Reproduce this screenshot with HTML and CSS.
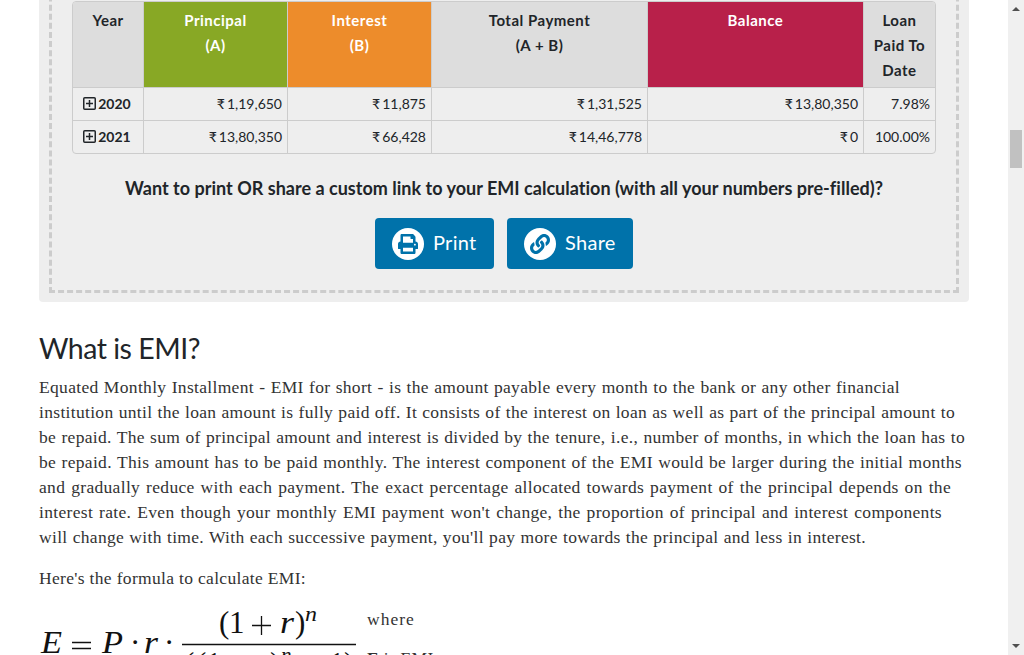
FILE: index.html
```html
<!DOCTYPE html>
<html lang="en">
<head>
<meta charset="utf-8">
<title>EMI Calculator</title>
<link rel="stylesheet" href="styles.css">
</head>
<body>
<div class="page">
<main class="content">
  <section class="panel">
    <div class="panel-inner">
      <table class="schedule">
        <colgroup><col class="c-year"><col class="c-mid"><col class="c-mid"><col class="c-wide"><col class="c-wide"><col class="c-paid"></colgroup>
        <thead>
          <tr><th>Year</th><th class="green">Principal<br>(A)</th><th class="orange">Interest<br>(B)</th><th>Total Payment<br>(A + B)</th><th class="red">Balance</th><th>Loan<br>Paid To<br>Date</th></tr>
        </thead>
        <tbody>
          <tr><td class="year"><svg class="plus" viewBox="0 0 13 13"><rect x=".75" y=".75" width="11.5" height="11.5" rx="1"/><path d="M6.5 3v7M3 6.5h7"/></svg>2020</td><td>₹ 1,19,650</td><td>₹ 11,875</td><td>₹ 1,31,525</td><td>₹ 13,80,350</td><td>7.98%</td></tr>
          <tr><td class="year"><svg class="plus" viewBox="0 0 13 13"><rect x=".75" y=".75" width="11.5" height="11.5" rx="1"/><path d="M6.5 3v7M3 6.5h7"/></svg>2021</td><td>₹ 13,80,350</td><td>₹ 66,428</td><td>₹ 14,46,778</td><td>₹ 0</td><td>100.00%</td></tr>
        </tbody>
      </table>
      <p class="prompt">Want to print OR share a custom link to your EMI calculation (with all your numbers pre-filled)?</p>
      <div class="buttons">
        <a class="btn btn-print"><span class="disc"><svg width="20" height="20" viewBox="0 0 512 512"><path d="M448 192V77.25c0-8.49-3.37-16.62-9.37-22.63L393.37 9.37c-6-6-14.14-9.37-22.63-9.37H96C78.33 0 64 14.33 64 32v160c-35.35 0-64 28.65-64 64v112c0 8.84 7.16 16 16 16h48v96c0 17.67 14.33 32 32 32h320c17.67 0 32-14.33 32-32v-96h48c8.84 0 16-7.16 16-16V256c0-35.35-28.65-64-64-64zm-64 256H128v-96h256v96zm0-224H128V64h192v48c0 8.84 7.16 16 16 16h48v96zm48 72c-13.25 0-24-10.75-24-24 0-13.26 10.75-24 24-24s24 10.74 24 24c0 13.25-10.75 24-24 24z"/></svg></span><span class="label">Print</span></a>
        <a class="btn btn-share"><span class="disc"><svg width="20" height="20" viewBox="0 0 512 512"><path d="M326.612 185.391c59.747 59.809 58.927 155.698.36 214.59-.11.12-.24.25-.36.37l-67.2 67.2c-59.27 59.27-155.699 59.262-214.96 0-59.27-59.26-59.27-155.7 0-214.96l37.106-37.106c9.84-9.84 26.786-3.3 27.294 10.606.648 17.722 3.826 35.527 9.69 52.721 1.986 5.822.567 12.262-3.783 16.612l-13.087 13.087c-28.026 28.026-28.905 73.66-1.155 101.96 28.024 28.579 74.086 28.749 102.325.51l67.2-67.19c28.191-28.191 28.073-73.757 0-101.83-3.701-3.694-7.429-6.564-10.341-8.569a16.037 16.037 0 0 1-6.947-12.606c-.396-10.567 3.348-21.456 11.698-29.806l21.054-21.055c5.521-5.521 14.182-6.199 20.584-1.731a152.482 152.482 0 0 1 20.522 17.197zM467.547 44.449c-59.261-59.262-155.69-59.27-214.96 0l-67.2 67.2c-.12.12-.25.25-.36.37-58.566 58.892-59.387 154.781.36 214.59a152.454 152.454 0 0 0 20.521 17.196c6.402 4.468 15.064 3.789 20.584-1.731l21.054-21.055c8.35-8.35 12.094-19.239 11.698-29.806a16.037 16.037 0 0 0-6.947-12.606c-2.912-2.005-6.64-4.875-10.341-8.569-28.073-28.073-28.191-73.639 0-101.83l67.2-67.19c28.239-28.239 74.3-28.069 102.325.51 27.75 28.3 26.872 73.934-1.155 101.96l-13.087 13.087c-4.35 4.35-5.769 10.79-3.783 16.612 5.864 17.194 9.042 34.999 9.69 52.721.509 13.906 17.454 20.446 27.294 10.606l37.106-37.106c59.271-59.259 59.271-155.699.001-214.959z"/></svg></span><span class="label">Share</span></a>
      </div>
    </div>
  </section>
  <h2>What is EMI?</h2>
  <p class="prose">
    <span class="line l1">Equated Monthly Installment - EMI for short - is the amount payable every month to the bank or any other financial</span>
    <span class="line l2">institution until the loan amount is fully paid off. It consists of the interest on loan as well as part of the principal amount to</span>
    <span class="line l3">be repaid. The sum of principal amount and interest is divided by the tenure, i.e., number of months, in which the loan has to</span>
    <span class="line l4">be repaid. This amount has to be paid monthly. The interest component of the EMI would be larger during the initial months</span>
    <span class="line l5">and gradually reduce with each payment. The exact percentage allocated towards payment of the principal depends on the</span>
    <span class="line l6">interest rate. Even though your monthly EMI payment won't change, the proportion of principal and interest components</span>
    <span class="line l7">will change with time. With each successive payment, you'll pay more towards the principal and less in interest.</span>
  </p>
  <p class="prose intro"><span class="line l8">Here's the formula to calculate EMI:</span></p>
  <div class="formula-row">
    <svg class="formula" width="318" height="100" viewBox="0 0 318 100">
      <g class="math">
        <text x="2" y="53" class="it" textLength="21" lengthAdjust="spacingAndGlyphs">E</text>
        <path d="M33 42.5h19M33 48.5h19"/>
        <text x="63" y="53" class="it" textLength="21" lengthAdjust="spacingAndGlyphs">P</text>
        <text x="91" y="53">·</text>
        <text x="105" y="53" class="it" textLength="14" lengthAdjust="spacingAndGlyphs">r</text>
        <text x="125" y="53">·</text>
        <text x="180" y="33">(</text><text x="190" y="33">1</text>
        <path d="M213 25.5h19M222.500 16v19"/>
        <text x="241" y="33" class="it" textLength="14" lengthAdjust="spacingAndGlyphs">r</text><text x="256" y="33">)</text>
        <text x="266" y="20.500" class="it sup" textLength="12" lengthAdjust="spacingAndGlyphs">n</text>
        <path d="M143 44.500h174"/>
        <text x="145" y="74">(</text><text x="157" y="74">(</text><text x="167" y="74">1</text>
        <path d="M191 66h19M200.500 56v19"/>
        <text x="217" y="74" class="it">r</text><text x="231" y="74">)</text>
        <text x="242" y="61.500" class="it sup">n</text>
        <path d="M262 66h19"/>
        <text x="290" y="74">1</text><text x="305" y="74">)</text>
      </g>
    </svg>
    <div class="legend"><p><span class="line l9">where</span></p><p class="term"><b>E</b> is EMI</p></div>
  </div>
</main>
<aside class="scrollbar"><i class="up"></i><i class="thumb"></i><i class="down"></i></aside>
</div>
</body>
</html>
```
FILE: styles.css
```css
* { box-sizing: border-box; }
body { margin: 0; background: #fff; color: #212529; overflow: hidden; }
.page { display: flex; height: 655px; overflow: hidden; }
.content { width: 1008px; padding: 0 39px; }
.panel { width: 930px; height: 362px; margin-top: -60px; padding: 10px; background: #eee; border-radius: 4px; }
.panel-inner { height: 343px; border: 3px dashed #ccc; padding: 48px 20px 0; font-family: Lato, sans-serif; font-variant-ligatures: none; }
.schedule { width: 864px; table-layout: fixed; border-collapse: separate; border-spacing: 0; border: 1px solid #ccc; border-radius: 4px; font-size: 14px; line-height: 25px; overflow: hidden; }
.c-year { width: 71px; } .c-mid { width: 144px; } .c-wide { width: 216px; } .c-paid { width: 71px; }
.schedule th { height: 86px; padding: 6px 5px 4px; vertical-align: top; font-size: 15px; letter-spacing: .5px; font-weight: 700; background: #ddd; border-right: 1px solid #ccc; border-bottom: 1px solid #ccc; }
.schedule th:last-child, .schedule td:last-child { border-right: 0; }
.schedule .green { background: #88a825; color: #fff; }
.schedule .orange { background: #ed8c2b; color: #fff; }
.schedule .red { background: #b8204a; color: #fff; }
.schedule td { height: 33px; padding: 3px 5px 4px; text-align: right; word-spacing: -1.5px; border-right: 1px solid #ccc; border-bottom: 1px solid #ccc; white-space: nowrap; }
.schedule tbody tr:last-child td { border-bottom: 0; height: 32px; }
.schedule .year { font-weight: 700; text-align: center; padding-right: 7px; }
.plus { width: 13px; height: 13px; margin-right: 2px; vertical-align: -1px; fill: none; stroke: #212529; stroke-width: 1.5; }
.prompt { margin: 21px 0 16px; text-align: center; font-size: 18px; line-height: 27px; font-weight: 700; letter-spacing: .015px; white-space: nowrap; }
.buttons { display: flex; justify-content: center; gap: 13px; }
.btn { height: 51px; display: flex; align-items: center; padding-left: 17px; gap: 9px; background: #0072aa; color: #fff; border-radius: 4px; font-size: 20px; }
.btn-print { width: 119px; }
.btn-share { width: 126px; }
.label { padding-bottom: 3px; letter-spacing: .3px; }
.disc { width: 32px; height: 32px; border-radius: 50%; background: #fff; display: flex; align-items: center; justify-content: center; }
.disc svg { fill: #0072aa; }
h2 { margin: 29px 0 9px; font: 400 28.5px/35px Lato, sans-serif; letter-spacing: -.5px; }
.prose, .legend { font-family: "Liberation Serif", serif; font-size: 17.5px; line-height: 25px; color: #333; }
.prose { margin: 0 0 16px; }
.line { display: block; text-align: justify; text-align-last: justify; white-space: nowrap; letter-spacing: .32px; }
.l1 { width: 861px; } .l2 { width: 916px; } .l3 { width: 926px; } .l4 { width: 923px; }
.l5 { width: 912px; } .l6 { width: 903px; } .l7 { width: 827px; } .l8 { width: 267px; } .l9 { width: 47px; letter-spacing: 1px; }
.prose.intro { margin-bottom: 9px; }
.formula-row { display: flex; gap: 10px; }
.formula { display: block; }
.math text { font: 31px "Liberation Serif", serif; fill: #111; }
.math .it { font-style: italic; }
.math .sup { font-size: 21px; }
.math path { stroke: #111; stroke-width: 1.3; fill: none; }
.legend p { margin: 7px 0 14px; }
.legend .term { letter-spacing: .3px; }
.scrollbar { width: 16px; height: 655px; background: #f0f0f0; display: flex; flex-direction: column; align-items: center; padding: 7px 0; }
.up { border: 4px solid transparent; border-top: 0; border-bottom-color: #505050; }
.thumb { width: 12px; height: 38px; margin: 119px 0 auto; background: #c1c1c1; }
.down { border: 4px solid transparent; border-bottom: 0; border-top-color: #505050; }
```
